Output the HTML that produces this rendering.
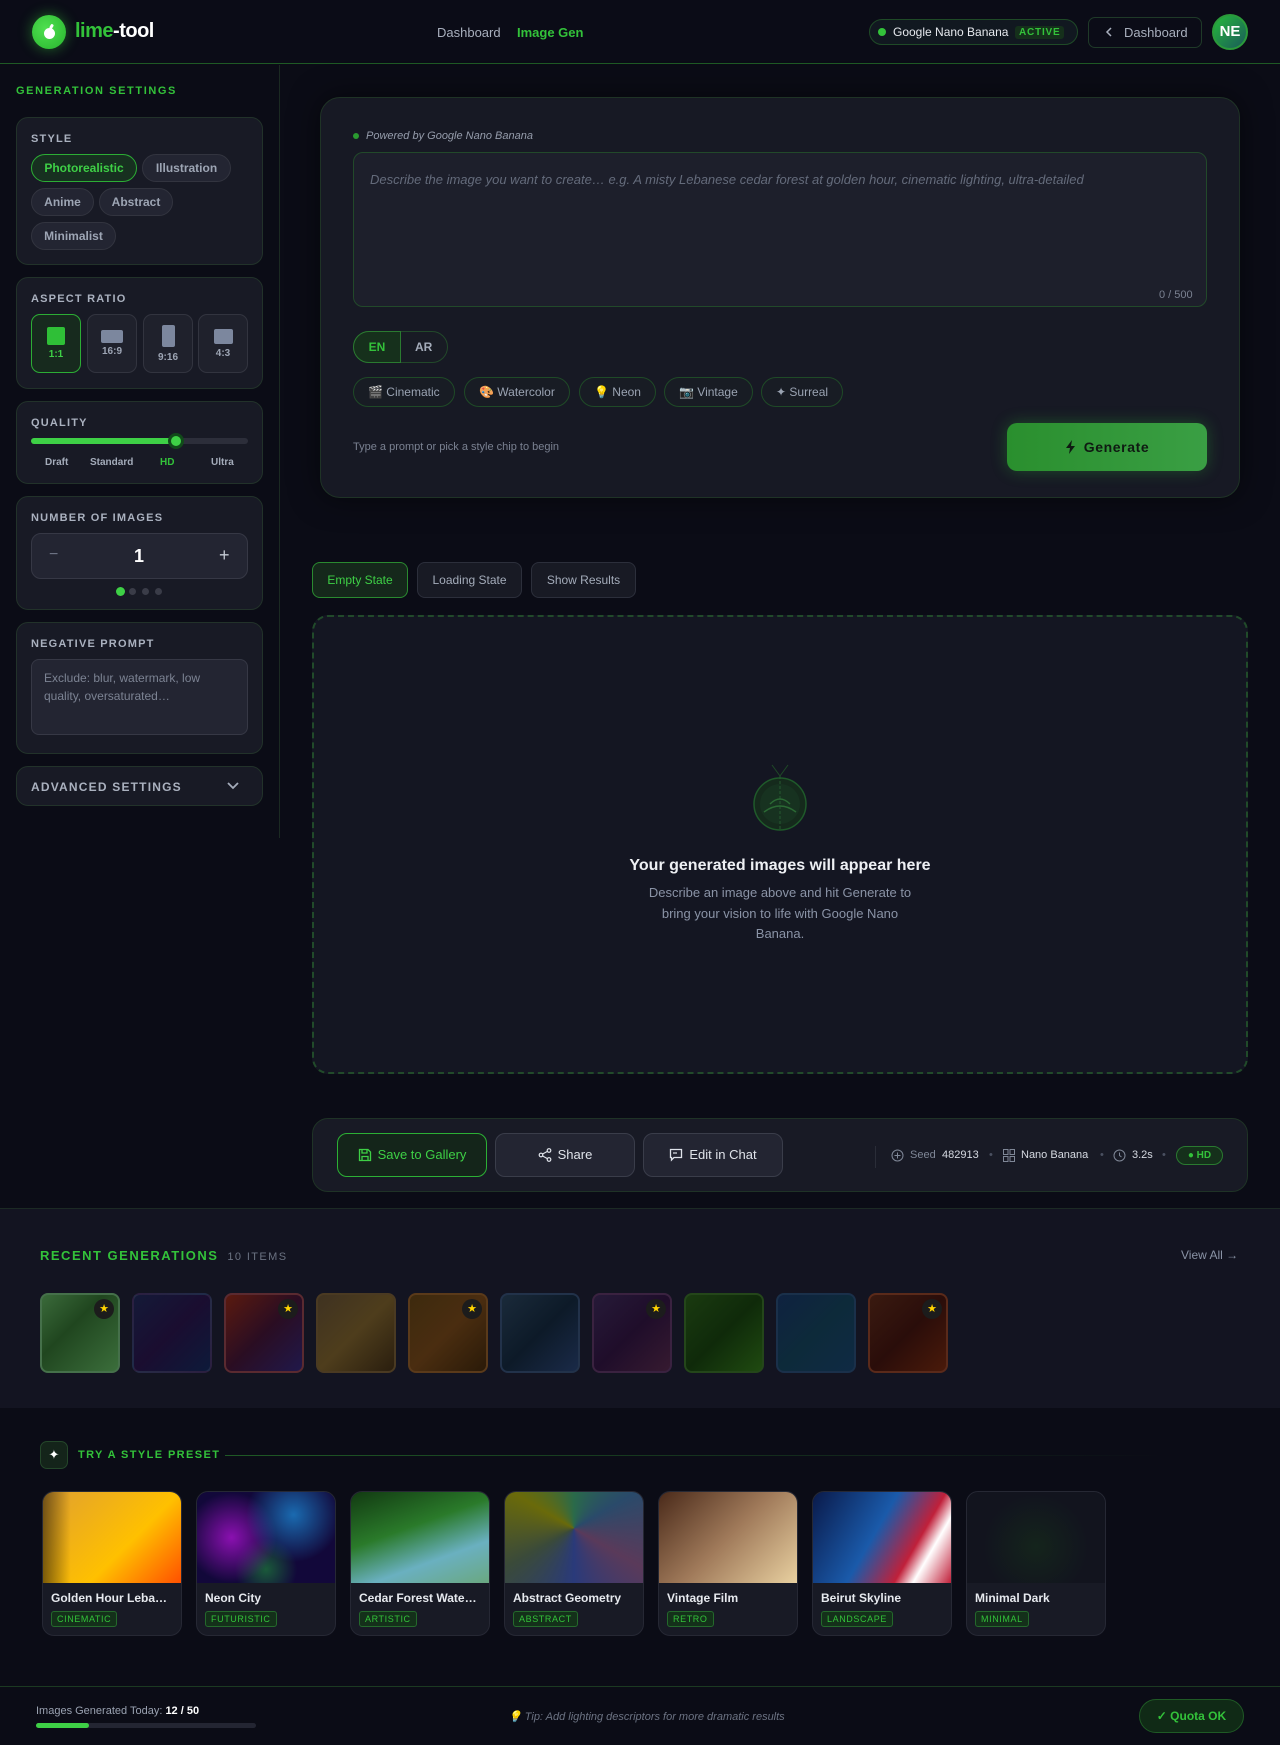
<!DOCTYPE html>
<html><head><meta charset="utf-8"><style>
*{box-sizing:border-box;margin:0;padding:0}
body{width:1280px;height:1745px;background:#0b0c16;font-family:"Liberation Sans",sans-serif;color:#cfd3dc;position:relative;overflow:hidden}
.abs{position:absolute}
.g{color:#33c23a}
.hdr{left:0;top:0;width:1280px;height:64px;background:#0b0c17;border-bottom:1px solid #1f5a25}
.logo{left:32px;top:15px;width:34px;height:34px;border-radius:50%;background:radial-gradient(circle at 40% 40%,#4fe04f,#28b42e);box-shadow:0 0 14px rgba(60,220,60,.45)}
.logo:after{content:"";position:absolute;left:12px;top:13px;width:11px;height:11px;border-radius:50%;background:#fff}
.logo:before{content:"";position:absolute;left:18px;top:9px;width:3px;height:5px;border-radius:2px;background:#fff;transform:rotate(30deg)}
.sidebar{left:0;top:65px;width:280px;height:773px;border-right:1px solid #1b2a22}
.card{position:absolute;left:16px;width:247px;background:#181a25;border:1px solid #22322a;border-radius:12px}
.lbl{font-size:11px;font-weight:bold;letter-spacing:1.2px;color:#aab1bf;position:absolute;left:14px}
.chip{position:absolute;height:28px;border-radius:14px;background:#232532;border:1px solid #32343f;font-size:12px;font-weight:bold;color:#9da5b4;line-height:26px;text-align:center}
.ar{position:absolute;top:36px;width:50px;height:59px;border-radius:9px;background:#1f212c;border:1px solid #32343f;font-size:10px;font-weight:bold;color:#9da5b4;text-align:center}
.ar i{display:block;margin:0 auto;background:#7c879e;border-radius:2px}
.pc{left:320px;top:97px;width:920px;height:401px;background:#171924;border:1px solid #1f3326;border-radius:20px;box-shadow:0 0 30px rgba(0,0,0,.5)}
.schip{position:absolute;top:377px;height:30px;border-radius:15px;border:1px solid #1f4a27;background:#181c24;font-size:12px;color:#9aa3b2;line-height:28px;padding:0 14px}
.tab{position:absolute;top:562px;height:36px;border-radius:8px;border:1px solid #2c2f3b;background:#181a24;font-size:12px;color:#a4acba;line-height:34px;text-align:center}
.btn{position:absolute;top:1133px;height:44px;border-radius:10px;border:1px solid #3a3d4a;background:#232532;font-size:13px;color:#dfe3ea;line-height:42px;text-align:center}
.btn svg{vertical-align:-3px;margin-right:6px}
.th{position:absolute;top:1293px;width:80px;height:80px;border-radius:8px;border:2px solid rgba(255,255,255,.08)}
.star{position:absolute;right:4px;top:4px;width:20px;height:20px;border-radius:50%;background:#1c1c1c;color:#ffd400;font-size:11px;line-height:20px;text-align:center}
.pr{position:absolute;top:1491px;width:140px;height:145px;border-radius:12px;background:#181a25;border:1px solid #262834;overflow:hidden}
.pr .im{height:91px}
.pr b{display:block;font-size:12px;color:#e6e9ee;padding:8px 8px 0;white-space:nowrap;overflow:hidden;text-overflow:ellipsis}
.pr span{display:inline-block;margin:6px 0 0 8px;font-size:9px;letter-spacing:.6px;color:#33c23a;border:1px solid #24692b;background:#14301a;border-radius:3px;padding:2px 5px}
.meta{position:absolute;top:1149px;font-size:11px;color:#d5d9e1}
</style></head><body>

<div class="abs hdr"></div>
<div class="abs logo"></div>
<div class="abs" style="left:75px;top:20px;font-size:20px;font-weight:bold;letter-spacing:-.5px"><span class="g">lime</span><span style="color:#fff">-tool</span></div>
<div class="abs" style="left:437px;top:25px;font-size:13px;color:#a8afbd">Dashboard</div>
<div class="abs g" style="left:517px;top:25px;font-size:13px;font-weight:bold">Image Gen</div>
<div class="abs" style="left:869px;top:19px;width:209px;height:26px;border-radius:13px;border:1px solid #1f4a27;background:#111820"></div>
<div class="abs" style="left:878px;top:28px;width:8px;height:8px;border-radius:50%;background:#33c23a"></div>
<div class="abs" style="left:893px;top:25px;font-size:12px;color:#e6e9ee">Google Nano Banana</div>
<div class="abs g" style="left:1015px;top:26px;font-size:10px;font-weight:bold;letter-spacing:.8px;background:#15301b;padding:1px 4px;border-radius:3px">ACTIVE</div>
<div class="abs" style="left:1088px;top:17px;width:114px;height:31px;border-radius:7px;border:1px solid #1f3a28;font-size:13px;color:#a8afbd;line-height:29px;padding-left:35px">Dashboard</div>
<svg class="abs" style="left:1105px;top:27px" width="8" height="10" viewBox="0 0 8 10"><path d="M6 1 L2 5 L6 9" fill="none" stroke="#a8afbd" stroke-width="1.5"/></svg>
<div class="abs" style="left:1212px;top:14px;width:36px;height:36px;border-radius:50%;background:linear-gradient(135deg,#25b83a,#1a5a5a);border:2px solid #2b9a3a;color:#fff;font-weight:bold;font-size:15px;text-align:center;line-height:32px">NE</div>

<!-- sidebar -->
<div class="abs sidebar"></div>
<div class="abs g" style="left:16px;top:85px;font-size:11px;font-weight:bold;letter-spacing:1.6px">GENERATION SETTINGS</div>

<div class="card" style="top:117px;height:148px">
 <div class="lbl" style="top:15px">STYLE</div>
 <div class="chip" style="left:14px;top:36px;width:106px;background:#173020;border-color:#2cad35;color:#3ed046">Photorealistic</div>
 <div class="chip" style="left:125px;top:36px;width:89px">Illustration</div>
 <div class="chip" style="left:14px;top:70px;width:63px">Anime</div>
 <div class="chip" style="left:82px;top:70px;width:74px">Abstract</div>
 <div class="chip" style="left:14px;top:104px;width:85px">Minimalist</div>
</div>

<div class="card" style="top:277px;height:112px">
 <div class="lbl" style="top:15px">ASPECT RATIO</div>
 <div class="ar" style="left:14px;background:#172a1e;border-color:#2cad35;color:#3ed046"><i style="width:18px;height:18px;margin-top:12px;background:#2fbf37"></i><div style="margin-top:4px">1:1</div></div>
 <div class="ar" style="left:70px"><i style="width:22px;height:13px;margin-top:15px"></i><div style="margin-top:3px">16:9</div></div>
 <div class="ar" style="left:126px"><i style="width:13px;height:22px;margin-top:10px"></i><div style="margin-top:5px">9:16</div></div>
 <div class="ar" style="left:181px"><i style="width:19px;height:15px;margin-top:14px"></i><div style="margin-top:4px">4:3</div></div>
</div>

<div class="card" style="top:401px;height:83px">
 <div class="lbl" style="top:15px">QUALITY</div>
 <div class="abs" style="left:14px;top:36px;width:217px;height:6px;border-radius:3px;background:#2c2e3a"></div>
 <div class="abs" style="left:14px;top:36px;width:145px;height:6px;border-radius:3px;background:#3ed046"></div>
 <div class="abs" style="left:151px;top:31px;width:16px;height:16px;border-radius:50%;background:#3ed046;border:3px solid #114a1a"></div>
 <div class="abs" style="left:28px;top:55px;font-size:10px;font-weight:bold;color:#a4acba">Draft</div>
 <div class="abs" style="left:73px;top:55px;font-size:10px;font-weight:bold;color:#a4acba">Standard</div>
 <div class="abs g" style="left:143px;top:55px;font-size:10px;font-weight:bold">HD</div>
 <div class="abs" style="left:194px;top:55px;font-size:10px;font-weight:bold;color:#a4acba">Ultra</div>
</div>

<div class="card" style="top:496px;height:114px">
 <div class="lbl" style="top:15px">NUMBER OF IMAGES</div>
 <div class="abs" style="left:14px;top:36px;width:217px;height:46px;border-radius:10px;background:#232532;border:1px solid #363845"></div>
 <div class="abs" style="left:32px;top:49px;font-size:16px;color:#6e7585">−</div>
 <div class="abs" style="left:117px;top:49px;font-size:18px;font-weight:bold;color:#fff">1</div>
 <div class="abs" style="left:202px;top:48px;font-size:18px;color:#c5cad4">+</div>
 <div class="abs" style="left:99px;top:90px;width:9px;height:9px;border-radius:50%;background:#3ed046"></div>
 <div class="abs" style="left:112px;top:91px;width:7px;height:7px;border-radius:50%;background:#3a3c48"></div>
 <div class="abs" style="left:125px;top:91px;width:7px;height:7px;border-radius:50%;background:#3a3c48"></div>
 <div class="abs" style="left:138px;top:91px;width:7px;height:7px;border-radius:50%;background:#3a3c48"></div>
</div>

<div class="card" style="top:622px;height:132px">
 <div class="lbl" style="top:15px">NEGATIVE PROMPT</div>
 <div class="abs" style="left:14px;top:36px;width:217px;height:76px;border-radius:8px;background:#232532;border:1px solid #363845;font-size:12px;color:#7c8393;line-height:18px;padding:9px 12px">Exclude: blur, watermark, low quality, oversaturated…</div>
</div>

<div class="card" style="top:766px;height:40px">
 <div class="lbl" style="top:13px;font-size:12px">ADVANCED SETTINGS</div>
 <svg class="abs" style="left:210px;top:15px" width="12" height="8" viewBox="0 0 12 8"><path d="M1 1 L6 6 L11 1" fill="none" stroke="#a4acba" stroke-width="1.8"/></svg>
</div>

<!-- prompt card -->
<div class="abs pc"></div>
<div class="abs" style="left:353px;top:133px;width:6px;height:6px;border-radius:50%;background:#2a9a30"></div>
<div class="abs" style="left:366px;top:130px;font-size:11px;font-style:italic;color:#959cab">Powered by Google Nano Banana</div>
<div class="abs" style="left:353px;top:152px;width:854px;height:155px;border-radius:10px;background:#1d1f2b;border:1px solid #22492a"></div>
<div class="abs" style="left:370px;top:172px;font-size:13px;font-style:italic;color:#646b7b">Describe the image you want to create… e.g. A misty Lebanese cedar forest at golden hour, cinematic lighting, ultra-detailed</div>
<div class="abs" style="left:1159px;top:289px;font-size:11px;color:#7a8191">0 / 500</div>
<div class="abs" style="left:353px;top:331px;width:95px;height:32px;border-radius:16px;border:1px solid #22492a;background:#181b24"></div>
<div class="abs g" style="left:353px;top:331px;width:48px;height:32px;border-radius:16px 0 0 16px;background:#16301c;border:1px solid #2a7a30;font-size:12px;font-weight:bold;text-align:center;line-height:30px">EN</div>
<div class="abs" style="left:415px;top:340px;font-size:12px;font-weight:bold;color:#a4acba">AR</div>
<div class="schip" style="left:353px">🎬 Cinematic</div>
<div class="schip" style="left:464px">🎨 Watercolor</div>
<div class="schip" style="left:579px">💡 Neon</div>
<div class="schip" style="left:664px">📷 Vintage</div>
<div class="schip" style="left:761px">✦ Surreal</div>
<div class="abs" style="left:353px;top:441px;font-size:11px;color:#7a8191">Type a prompt or pick a style chip to begin</div>
<div class="abs" style="left:1007px;top:423px;width:200px;height:48px;border-radius:10px;background:linear-gradient(90deg,#2a8f2e,#3a9f44);box-shadow:0 0 16px rgba(50,200,60,.3);color:#0f1a12;font-size:14px;font-weight:bold;letter-spacing:.6px;text-align:center;line-height:48px"><svg width="11" height="14" viewBox="0 0 11 14" style="vertical-align:-2px;margin-right:8px"><path d="M7 0 L1 8 H5 L4 14 L10 6 H6 Z" fill="#0f1a12"/></svg>Generate</div>

<!-- tabs -->
<div class="tab" style="left:312px;width:96px;background:#15281b;border-color:#2a8a30;color:#3ed046">Empty State</div>
<div class="tab" style="left:417px;width:105px">Loading State</div>
<div class="tab" style="left:531px;width:105px">Show Results</div>

<div class="abs" style="left:312px;top:615px;width:936px;height:459px;border-radius:16px;border:2px dashed #214a2a;background:#141622"></div>
<svg class="abs" style="left:750px;top:762px" width="60" height="72" viewBox="0 0 60 72">
 <line x1="22" y1="3" x2="30" y2="14" stroke="#1f4a27"/><line x1="38" y1="3" x2="30" y2="14" stroke="#1f4a27"/>
 <circle cx="30" cy="42" r="26" fill="#152a1c" stroke="#1f5a2a" stroke-width="1.5"/>
 <circle cx="30" cy="42" r="20" fill="#173220"/>
 <line x1="30" y1="14" x2="30" y2="68" stroke="#265a30" stroke-dasharray="3 2"/>
 <path d="M20 42 Q30 32 40 42" fill="none" stroke="#2b6a34" stroke-width="1.5"/>
 <path d="M14 50 Q30 38 46 50" fill="none" stroke="#2b6a34" stroke-width="1.5"/>
</svg>
<div class="abs" style="left:312px;top:857px;width:936px;text-align:center;font-size:16px;font-weight:bold;color:#eef0f4">Your generated images will appear here</div>
<div class="abs" style="left:640px;top:883px;width:280px;text-align:center;font-size:13px;line-height:20.5px;color:#8a93a6">Describe an image above and hit Generate to bring your vision to life with Google Nano Banana.</div>

<!-- action bar -->
<div class="abs" style="left:312px;top:1118px;width:936px;height:74px;border-radius:16px;background:#181a25;border:1px solid #1f3326"></div>
<div class="btn" style="left:337px;width:150px;background:#14251a;border-color:#2cb035;color:#3ed046"><svg width="14" height="14" viewBox="0 0 14 14"><path d="M1.5 1.5 H10 L12.5 4 V12.5 H1.5 Z M4 1.5 V5 H9 V1.5 M4 12.5 V8.5 H10 V12.5" fill="none" stroke="#3ed046" stroke-width="1.3"/></svg>Save to Gallery</div>
<div class="btn" style="left:495px;width:140px"><svg width="14" height="14" viewBox="0 0 14 14"><circle cx="11" cy="2.5" r="1.8" fill="none" stroke="#dfe3ea" stroke-width="1.2"/><circle cx="3" cy="7" r="1.8" fill="none" stroke="#dfe3ea" stroke-width="1.2"/><circle cx="11" cy="11.5" r="1.8" fill="none" stroke="#dfe3ea" stroke-width="1.2"/><path d="M4.6 6 L9.4 3.4 M4.6 8 L9.4 10.6" stroke="#dfe3ea" stroke-width="1.2"/></svg>Share</div>
<div class="btn" style="left:643px;width:140px"><svg width="14" height="14" viewBox="0 0 14 14"><path d="M1.5 1.5 H12.5 V9.5 H5 L2.5 12 V9.5 H1.5 Z" fill="none" stroke="#dfe3ea" stroke-width="1.3"/><path d="M4 5 H8" stroke="#dfe3ea" stroke-width="1.2"/></svg>Edit in Chat</div>
<div class="abs" style="left:875px;top:1146px;width:1px;height:22px;background:#2a2d38"></div>
<svg class="abs" style="left:891px;top:1149px" width="13" height="13" viewBox="0 0 13 13"><circle cx="6.5" cy="6.5" r="5.5" fill="none" stroke="#7f8797"/><path d="M6.5 3.5 V9.5 M3.5 6.5 H9.5" stroke="#7f8797"/></svg>
<div class="meta" style="left:910px;color:#7f8797">Seed</div>
<div class="meta" style="left:942px">482913</div>
<div class="meta" style="left:989px;color:#4a5060">•</div>
<svg class="abs" style="left:1003px;top:1149px" width="12" height="13" viewBox="0 0 12 13"><rect x="0.5" y="0.5" width="4.5" height="5" fill="none" stroke="#7f8797"/><rect x="7" y="0.5" width="4.5" height="5" fill="none" stroke="#7f8797"/><rect x="0.5" y="7.5" width="4.5" height="5" fill="none" stroke="#7f8797"/><rect x="7" y="7.5" width="4.5" height="5" fill="none" stroke="#7f8797"/></svg>
<div class="meta" style="left:1021px">Nano Banana</div>
<div class="meta" style="left:1100px;color:#4a5060">•</div>
<svg class="abs" style="left:1113px;top:1149px" width="13" height="13" viewBox="0 0 13 13"><circle cx="6.5" cy="6.5" r="5.5" fill="none" stroke="#7f8797"/><path d="M6.5 3.5 V6.5 L8.5 8" fill="none" stroke="#7f8797"/></svg>
<div class="meta" style="left:1132px">3.2s</div>
<div class="meta" style="left:1162px;color:#4a5060">•</div>
<div class="abs g" style="left:1176px;top:1146px;width:47px;height:19px;border-radius:10px;background:#15301b;border:1px solid #2a7a30;font-size:10px;font-weight:bold;text-align:center;line-height:17px">● HD</div>

<!-- recent -->
<div class="abs" style="left:0;top:1208px;width:1280px;height:200px;background:#131421;border-top:1px solid #1c2a24"></div>
<div class="abs g" style="left:40px;top:1248px;font-size:13px;font-weight:bold;letter-spacing:1.5px">RECENT GENERATIONS<span style="color:#6b7282;font-weight:normal;font-size:11px;letter-spacing:1.4px"> &nbsp;10 ITEMS</span></div>
<div class="abs" style="left:1181px;top:1248px;font-size:12px;color:#8a93a6">View All →</div>
<div class="th" style="left:40px;background:linear-gradient(135deg,#3a6a3a,#20461f 40%,#3b6e3b);border-color:#45704a"><div class="star">★</div></div>
<div class="th" style="left:132px;background:linear-gradient(135deg,#141a38,#1a0d30 50%,#0d1a3a)"></div>
<div class="th" style="left:224px;background:linear-gradient(135deg,#5a1a0f,#2a0d22 50%,#20184a);border-color:#5a2a30"><div class="star">★</div></div>
<div class="th" style="left:316px;background:linear-gradient(135deg,#3f3221,#4e3d1c 50%,#2a1e0e);border-color:#4a3a22"></div>
<div class="th" style="left:408px;background:linear-gradient(135deg,#3d2a0e,#4a2d10 50%,#2a1a08);border-color:#5a3a1a"><div class="star">★</div></div>
<div class="th" style="left:500px;background:linear-gradient(135deg,#1a2a3a,#0d1a28 50%,#1a2a48);border-color:#22324a"></div>
<div class="th" style="left:592px;background:linear-gradient(135deg,#261a38,#1f0d2a 50%,#361a30);border-color:#3a2240"><div class="star">★</div></div>
<div class="th" style="left:684px;background:linear-gradient(135deg,#1a3a10,#0f2a0a 50%,#1f4a10);border-color:#24461a"></div>
<div class="th" style="left:776px;background:linear-gradient(135deg,#0f2240,#0d2a3a 50%,#0f2a44);border-color:#1a304a"></div>
<div class="th" style="left:868px;background:linear-gradient(135deg,#3a1a10,#2a0d0a 50%,#4a1a0a);border-color:#5a2a1a"><div class="star">★</div></div>

<!-- presets -->
<div class="abs" style="left:40px;top:1441px;width:28px;height:28px;border-radius:7px;background:#14241a;border:1px solid #24462a;color:#fff;text-align:center;line-height:26px;font-size:13px">✦</div>
<div class="abs g" style="left:78px;top:1449px;font-size:11px;font-weight:bold;letter-spacing:1.4px">TRY A STYLE PRESET</div>
<div class="abs" style="left:225px;top:1455px;width:940px;height:1px;background:linear-gradient(90deg,#1f5a25,rgba(31,90,37,0))"></div>
<div class="pr" style="left:42px"><div class="im" style="background:linear-gradient(90deg,rgba(0,0,0,.5),rgba(0,0,0,0) 20%),linear-gradient(135deg,#e0a030,#ffc000 60%,#ff5000)"></div><b>Golden Hour Leban…</b><span>CINEMATIC</span></div>
<div class="pr" style="left:196px"><div class="im" style="background:radial-gradient(circle at 70% 25%,#1a6ab0,transparent 40%),radial-gradient(circle at 25% 50%,#8a10b0,transparent 40%),radial-gradient(circle at 50% 85%,#1a5a3a,transparent 30%),#12083a"></div><b>Neon City</b><span>FUTURISTIC</span></div>
<div class="pr" style="left:350px"><div class="im" style="background:linear-gradient(160deg,#123a12,#2a7a2a 40%,#6ab0c0 70%,#6aa880)"></div><b>Cedar Forest Water…</b><span>ARTISTIC</span></div>
<div class="pr" style="left:504px"><div class="im" style="background:conic-gradient(from 0deg at 50% 40%,#2a6a4a,#2a4a6a,#5a3a5a,#2a3a7a,#3a4a3a,#6a6a0a,#2a6a4a)"></div><b>Abstract Geometry</b><span>ABSTRACT</span></div>
<div class="pr" style="left:658px"><div class="im" style="background:linear-gradient(135deg,#4a2a1a,#a07a5a 50%,#e8d0a0)"></div><b>Vintage Film</b><span>RETRO</span></div>
<div class="pr" style="left:812px"><div class="im" style="background:linear-gradient(120deg,#0a1a4a,#1a5aaa 45%,#c0203a 70%,#fff 80%,#c0203a)"></div><b>Beirut Skyline</b><span>LANDSCAPE</span></div>
<div class="pr" style="left:966px"><div class="im" style="background:radial-gradient(circle at 50% 60%,#14241c,#12141e 60%)"></div><b>Minimal Dark</b><span>MINIMAL</span></div>

<!-- footer -->
<div class="abs" style="left:0;top:1686px;width:1280px;height:59px;background:#0b0c16;border-top:1px solid #1c3a22"></div>
<div class="abs" style="left:36px;top:1705px;font-size:11px;color:#9aa2b1">Images Generated Today: <b style="color:#fff">12 / 50</b></div>
<div class="abs" style="left:36px;top:1723px;width:220px;height:5px;border-radius:3px;background:#232532"></div>
<div class="abs" style="left:36px;top:1723px;width:53px;height:5px;border-radius:3px;background:#3ed046"></div>
<div class="abs" style="left:508px;top:1710px;font-size:11px;font-style:italic;color:#6c7383">💡 Tip: Add lighting descriptors for more dramatic results</div>
<div class="abs g" style="left:1139px;top:1699px;width:105px;height:34px;border-radius:17px;background:#102a16;border:1px solid #1f5a25;font-size:12px;font-weight:bold;text-align:center;line-height:32px">✓ Quota OK</div>
</body></html>
